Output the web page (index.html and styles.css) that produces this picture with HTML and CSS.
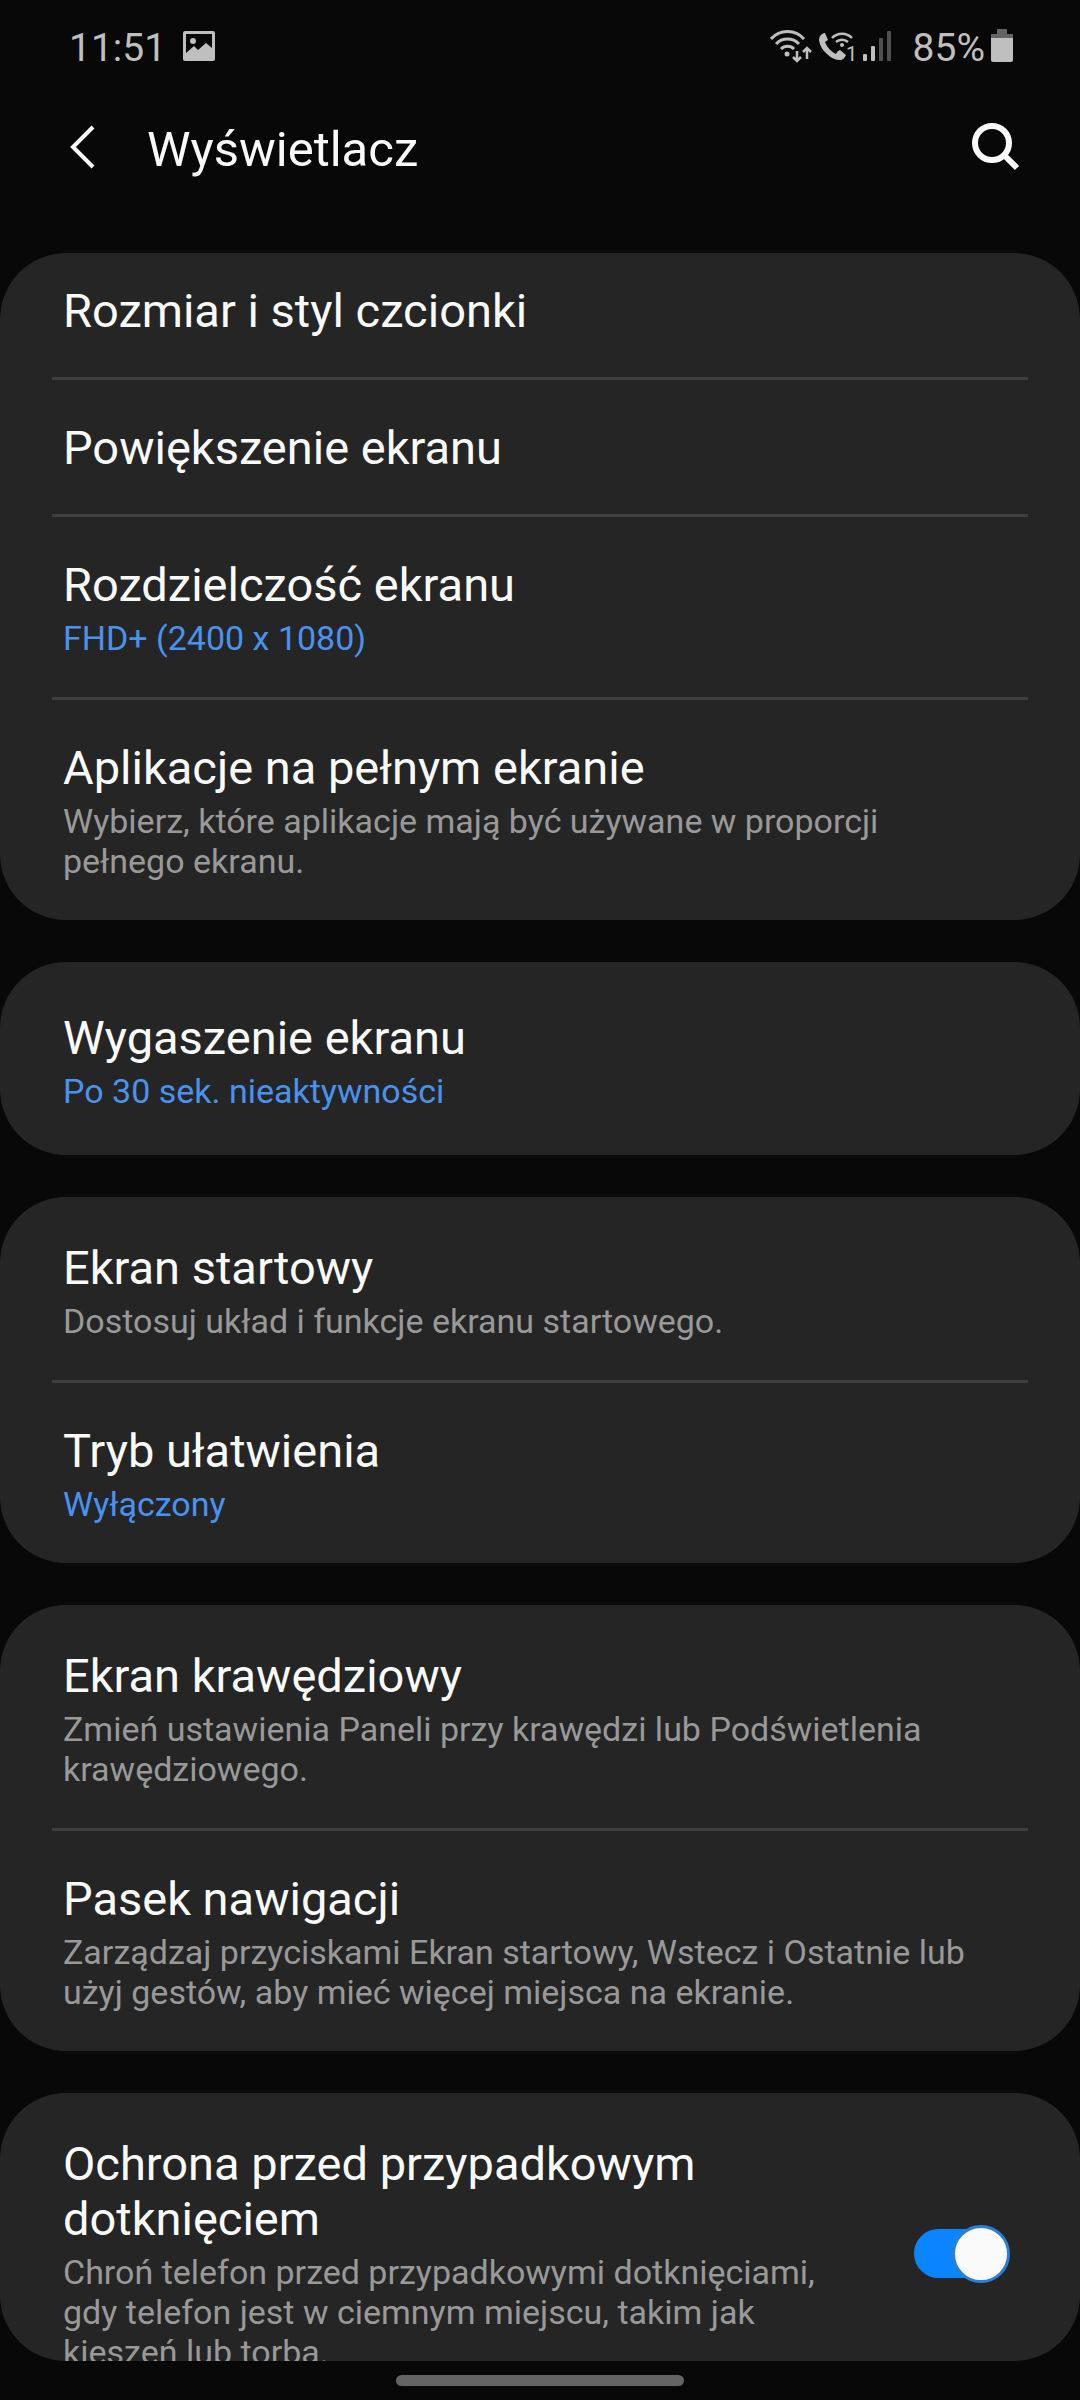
FILE: index.html
```html
<!DOCTYPE html>
<html lang="pl">

<head>
  <meta charset="UTF-8">
  <meta name="viewport" content="width=device-width, initial-scale=1.0">
  <title>Wyświetlacz</title>
  <link rel="stylesheet" href="styles.css">
</head>

<body>
  <div class="screen">
    <!-- status bar -->
    <div class="status-bar">
      <span class="clock">11:51</span>
      <svg class="icon-image" width="32" height="30" viewBox="0 0 32 30">
        <path fill="currentColor" fill-rule="evenodd" d="M2 0H30Q32 0 32 2V28Q32 30 30 30H2Q0 30 0 28V2Q0 0 2 0ZM3 3V22L11 15L15 19L23 12L29 17V3Z"/>
        <circle cx="10" cy="10" r="3" fill="currentColor"/>
      </svg>
      <div class="status-icons">
        <svg width="42" height="34" viewBox="0 0 42 34" fill="none" stroke="currentColor" stroke-width="3">
          <path d="M1 10A22 22 0 0 1 34 10M6 15A16 16 0 0 1 29 15M11 20A9 9 0 0 1 24 20"/>
          <circle cx="17" cy="25" r="2.5" fill="currentColor" stroke="none"/>
          <path stroke-width="2.5" d="M27 22V32M23 28L27 32L31 28M37 30V19M33 23L37 19L41 23"/>
        </svg>
        <svg class="icon-call" width="44" height="34" viewBox="0 0 44 34" fill="none" stroke="currentColor" stroke-width="2.5">
          <path fill="currentColor" stroke="none" d="M6 4Q1 6 1 11Q2 19 9 25Q15 31 22 31Q26 31 28 26L22 21Q19 22 18 25Q10 21 7 13L10 11L7 4Z"/>
          <path d="M14 9A14 14 0 0 1 34 9M18 13A9 9 0 0 1 30 13"/>
          <circle cx="24" cy="16" r="2" fill="currentColor" stroke="none"/>
          <text class="sim" x="28" y="32">1</text>
        </svg>
        <svg class="icon-signal" width="28" height="30" viewBox="0 0 28 30" fill="currentColor">
          <rect x="0" y="23" width="4" height="7" rx="1"/>
          <rect x="8" y="15" width="4" height="15" rx="1"/>
          <rect x="16" y="7" width="4" height="23" rx="1" opacity="0.4"/>
          <rect x="24" y="0" width="4" height="30" rx="1" opacity="0.4"/>
        </svg>
        <span class="battery-level">85%</span>
        <svg class="icon-battery" width="22" height="34" viewBox="0 0 22 34" fill="currentColor">
          <path opacity="0.5" d="M6 0H16V5H22V9H0V5H6Z"/>
          <path d="M0 9H22V31Q22 33 20 33H2Q0 33 0 31Z"/>
        </svg>
      </div>
    </div>

    <!-- header -->
    <header class="header">
      <button class="back" aria-label="Wstecz">
        <svg width="26" height="44" viewBox="0 0 26 44" fill="none" stroke="currentColor" stroke-width="4">
          <path d="M23 2L3 22L23 42"/>
        </svg>
      </button>
      <h1>Wyświetlacz</h1>
      <button class="search" aria-label="Szukaj">
        <svg width="48" height="48" viewBox="0 0 48 48" fill="none" stroke="currentColor" stroke-width="6">
          <circle cx="20" cy="20" r="17"/>
          <path d="M32 32L45 45"/>
        </svg>
      </button>
    </header>

    <!-- settings list -->
    <main class="settings">
      <section class="card card-scrolled">
        <a class="item" href="#">
          <span class="title">Rozmiar i styl czcionki</span>
        </a>
        <a class="item" href="#">
          <span class="title">Powiększenie ekranu</span>
        </a>
        <a class="item" href="#">
          <span class="title">Rozdzielczość ekranu</span>
          <span class="summary value">FHD+ (2400 x 1080)</span>
        </a>
        <a class="item" href="#">
          <span class="title">Aplikacje na pełnym ekranie</span>
          <span class="summary">Wybierz, które aplikacje mają być używane w proporcji pełnego ekranu.</span>
        </a>
      </section>

      <section class="card card-single">
        <a class="item" href="#">
          <span class="title">Wygaszenie ekranu</span>
          <span class="summary value">Po 30 sek. nieaktywności</span>
        </a>
      </section>

      <section class="card">
        <a class="item" href="#">
          <span class="title">Ekran startowy</span>
          <span class="summary">Dostosuj układ i funkcje ekranu startowego.</span>
        </a>
        <a class="item" href="#">
          <span class="title">Tryb ułatwienia</span>
          <span class="summary value">Wyłączony</span>
        </a>
      </section>

      <section class="card">
        <a class="item" href="#">
          <span class="title">Ekran krawędziowy</span>
          <span class="summary">Zmień ustawienia Paneli przy krawędzi lub Podświetlenia krawędziowego.</span>
        </a>
        <a class="item" href="#">
          <span class="title">Pasek nawigacji</span>
          <span class="summary">Zarządzaj przyciskami Ekran startowy, Wstecz i Ostatnie lub użyj gestów, aby mieć więcej miejsca na ekranie.</span>
        </a>
      </section>

      <section class="card">
        <label class="item item-switch" for="touchProtection">
          <span class="item-text">
            <span class="title">Ochrona przed przypadkowym dotknięciem</span>
            <span class="summary">Chroń telefon przed przypadkowymi dotknięciami, gdy telefon jest w ciemnym miejscu, takim jak kieszeń lub torba.</span>
          </span>
          <input class="switch" type="checkbox" id="touchProtection" checked>
        </label>
      </section>
    </main>

    <!-- gesture bar -->
    <div class="nav-bar">
      <div class="nav-handle"></div>
    </div>
  </div>
</body>

</html>
```

FILE: styles.css
```css
*,
*::before,
*::after {
  box-sizing: border-box;
}

body {
  margin: 0;
  background-color: #080808;
  color: #fafafa;
  font-family: Roboto, "Liberation Sans", sans-serif;
}

.screen {
  display: flex;
  flex-direction: column;
  height: 100vh;
}

/* status bar */
.status-bar {
  display: flex;
  align-items: center;
  height: 92px;
  padding: 0 67px 0 69px;
  color: #bfbfbf;
  font-size: 39px;
  line-height: 46px;
}

.clock,
.battery-level {
  padding-top: 4px;
}

.icon-image {
  margin-left: 17px;
}

.status-icons {
  display: flex;
  align-items: center;
  margin-left: auto;
}

.icon-call {
  margin-left: 6px;
}

.sim {
  fill: currentColor;
  stroke: none;
  font-size: 20px;
}

.icon-signal {
  margin-left: 1px;
}

.battery-level {
  margin-left: 22px;
}

.icon-battery {
  margin-left: 6px;
}

/* header */
.header {
  display: flex;
  align-items: center;
  height: 110px;
  margin-bottom: 51px;
  padding: 0 60px 0 70px;
}

.header button {
  display: flex;
  padding: 0;
  border: 0;
  background: none;
  color: #fafafa;
  cursor: pointer;
}

.header h1 {
  margin: 0 0 0 51px;
  padding-top: 6px;
  font-size: 49px;
  font-weight: 400;
  line-height: 60px;
}

.header .search {
  margin-left: auto;
}

/* settings list */
.settings {
  flex: 1;
  min-height: 0;
  overflow-y: auto;
  scrollbar-width: none;
  border-radius: 66px;
}

.card {
  padding-top: 3px;
  border-radius: 66px;
  background-color: #252525;
}

.card + .card {
  margin-top: 42px;
}

.card-single {
  padding: 8px 0 5px;
}

.item {
  display: block;
  padding: 40px 90px 39px 63px;
  color: #fafafa;
  text-decoration: none;
}

/* divider */
.item + .item::before {
  content: "";
  display: block;
  height: 3px;
  margin: -40px -38px 40px -11px;
  background-color: #404040;
}

/* first row sits partly above the top of the list */
.card-scrolled {
  padding-top: 0;
}

.card-scrolled .item:first-child {
  padding-top: 30px;
}

.title,
.summary {
  display: block;
}

.title {
  font-size: 47px;
  line-height: 55px;
}

.summary {
  margin-top: 6px;
  color: #999999;
  font-size: 34px;
  line-height: 40px;
}

.value {
  color: #4a92ef;
}

.item-switch {
  display: flex;
  align-items: center;
  gap: 48px;
  padding-right: 70px;
}

.item-text {
  flex: 1;
}

.switch {
  appearance: none;
  position: relative;
  flex: none;
  width: 96px;
  height: 58px;
  margin: 0;
  cursor: pointer;
}

.switch::before {
  content: "";
  position: absolute;
  top: 4px;
  left: 0;
  width: 94px;
  height: 49px;
  border-radius: 25px;
  background-color: #5c5c5c;
}

.switch::after {
  content: "";
  position: absolute;
  top: 0;
  left: 0;
  width: 58px;
  height: 58px;
  border: 3px solid #5c5c5c;
  border-radius: 50%;
  background-color: #fafafa;
}

.switch:checked::before {
  background-color: #0a84ff;
}

.switch:checked::after {
  left: 38px;
  border-color: #2c7fd6;
}

/* gesture bar */
.nav-bar {
  display: flex;
  justify-content: center;
  height: 39px;
  padding-top: 14px;
}

.nav-handle {
  width: 288px;
  height: 11px;
  border-radius: 6px;
  background-color: #646464;
}
```
